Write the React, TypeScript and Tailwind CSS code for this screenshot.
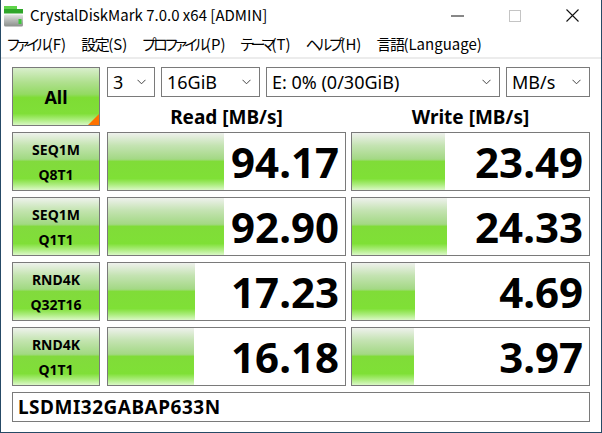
import React from 'react';

// Sizes are measured from a 125% DPI Windows 10 window
const uiFont = "font-['Noto_Sans_CJK_JP','Noto_Sans',sans-serif] [font-feature-settings:'palt']";
const numFont = "font-['Noto_Sans','Liberation_Sans',sans-serif]";

const meterGradient =
  'bg-[linear-gradient(to_bottom,#eef1ec_0%,#c4e3b2_22%,#a3d884_46%,#80dc38_50%,#7fe036_80%,#a9ec79_90%,#daf8c6_100%)]';
const buttonGradient =
  'bg-[linear-gradient(to_bottom,#eef2ec_0%,#c3e4af_22%,#a1d982_46%,#82da3d_50%,#80df38_80%,#aaec7b_90%,#dcf8c8_100%)]';
const allGradient =
  'bg-[linear-gradient(to_bottom,#d9efcc_0%,#b0e08f_25%,#93da62_46%,#7edc34_52%,#80df38_80%,#a8ec78_90%,#d8f7c3_100%)]';

type Row = {
  top: string;
  bottom: string;
  read: string;
  write: string;
  readBar: number;  // px inside the cell
  writeBar: number;
};

const rows: Row[] = [
  { top: 'SEQ1M', bottom: 'Q8T1', read: '94.17', write: '23.49', readBar: 116, writeBar: 93 },
  { top: 'SEQ1M', bottom: 'Q1T1', read: '92.90', write: '24.33', readBar: 116, writeBar: 95 },
  { top: 'RND4K', bottom: 'Q32T16', read: '17.23', write: '4.69', readBar: 87, writeBar: 63 },
  { top: 'RND4K', bottom: 'Q1T1', read: '16.18', write: '3.97', readBar: 86, writeBar: 62 },
];

// Yu Gothic UI kana are much narrower than Noto's, so squeeze them a little
const Kana = ({ children, tight }: { children: React.ReactNode; tight?: boolean }) => (
  <span className={tight ? 'tracking-[-3.6px]' : 'tracking-[-2.8px]'}>{children}</span>
);
const Kanji = ({ children }: { children: React.ReactNode }) => (
  <span className="tracking-[-1.5px]">{children}</span>
);

const AppIcon = () => (
  <svg width="20" height="21" viewBox="0 0 20 21" className="shrink-0">
    <defs>
      <linearGradient id="diskBody" x1="0" y1="0" x2="0" y2="1">
        <stop offset="0%" stopColor="#e4e6e4" />
        <stop offset="45%" stopColor="#b9bcb9" />
        <stop offset="100%" stopColor="#8b8f8b" />
      </linearGradient>
    </defs>
    <rect x="0" y="0" width="13" height="3.5" fill="#5fd44a" />
    <rect x="0" y="3" width="19" height="4.5" fill="#2fa62a" />
    <rect x="0" y="8.5" width="19" height="12" rx="1.5" fill="url(#diskBody)" />
    <rect x="14.5" y="13" width="3" height="5" fill="#3cc93a" />
  </svg>
);

const Chevron = () => (
  <svg width="9" height="6" viewBox="0 0 9 6" className="shrink-0">
    <polyline points="0.5,0.8 4.5,4.8 8.5,0.8" fill="none" stroke="#444" strokeWidth="1" />
  </svg>
);

const Select = ({ value, width }: { value: string; width: string }) => (
  <div
    className={`${width} h-[30px] flex items-center justify-between border border-[#7a7a7a] bg-white pl-[5px] pr-[8px] ${numFont} text-[18px] leading-none text-black`}
  >
    <span>{value}</span>
    <Chevron />
  </div>
);

const Cell = ({ value, bar }: { value: string; bar: number }) => (
  <div className="relative w-[239px] h-[59px] border border-[#7a7a7a] bg-white flex items-center justify-end pr-[6px]">
    <div className={`absolute left-0 top-0 bottom-0 ${meterGradient}`} style={{ width: bar }} />
    <span className={`relative ${numFont} font-bold text-[42px] leading-none text-black`}>{value}</span>
  </div>
);

export default function App() {
  return (
    <div className="w-[602px] h-[433px] bg-white border-x border-b border-[#264a66] flex flex-col overflow-hidden">
      {/* title bar */}
      <div className={`h-[31px] flex items-center ${uiFont} text-[15px] text-black`}>
        <div className="pl-[3px] pr-[6px] pt-[1px]">
          <AppIcon />
        </div>
        <span className="pb-[1px]">CrystalDiskMark 7.0.0 x64 [ADMIN]</span>
        <div className="flex-1" />
        <div className="w-[58px] h-full flex items-center justify-center">
          <svg width="13" height="2" viewBox="0 0 13 2">
            <line x1="0" y1="1" x2="13" y2="1" stroke="#111" strokeWidth="1" />
          </svg>
        </div>
        <div className="w-[58px] h-full flex items-center justify-center">
          <svg width="12" height="12" viewBox="0 0 12 12">
            <rect x="0.5" y="0.5" width="11" height="11" fill="none" stroke="#c4c4c4" strokeWidth="1" />
          </svg>
        </div>
        <div className="w-[57px] h-full flex items-center justify-center">
          <svg width="13" height="13" viewBox="0 0 13 13">
            <path d="M0.5 0.5 L12.5 12.5 M12.5 0.5 L0.5 12.5" stroke="#111" strokeWidth="1.1" />
          </svg>
        </div>
      </div>

      {/* menu bar */}
      <div className={`h-[26px] flex items-center gap-[15px] pl-[6px] ${uiFont} text-[15px] text-black`}>
        <span><Kana>ファイル</Kana>(F)</span>
        <span><Kanji>設定</Kanji>(S)</span>
        <span><Kana>プロファイル</Kana>(P)</span>
        <span><Kana tight>テーマ</Kana>(T)</span>
        <span><Kana>ヘルプ</Kana>(H)</span>
        <span><Kanji>言語</Kanji>(Language)</span>
      </div>
      <div className="h-[2px] bg-[#ececec]" />

      {/* main panel */}
      <div className="flex flex-col pl-[11px] pt-[8px]">
        <div className="flex">
          <div
            className={`relative w-[88px] h-[59px] border border-[#7a7a7a] ${allGradient} flex items-center justify-center overflow-hidden`}
          >
            <span className={`${numFont} font-bold text-[18px] leading-none text-black`}>All</span>
            <div className="absolute right-0 bottom-0 w-0 h-0 border-l-[11px] border-l-transparent border-b-[11px] border-b-[#ff7200]" />
          </div>
          <div className="ml-[7px] flex flex-col">
            <div className="flex gap-[6px]">
              <Select value="3" width="w-[48px]" />
              <Select value="16GiB" width="w-[99px]" />
              <Select value="E: 0% (0/30GiB)" width="w-[234px]" />
              <Select value="MB/s" width="w-[84px]" />
            </div>
            <div className={`flex h-[35px] pt-[6px] ${numFont} font-bold text-[19px] leading-[29px] text-black`}>
              <div className="w-[239px] text-center">Read [MB/s]</div>
              <div className="w-[239px] ml-[5px] text-center">Write [MB/s]</div>
            </div>
          </div>
        </div>

        <div className="flex flex-col gap-[6px]">
          {rows.map((r, i) => (
            <div key={i} className="flex">
              <div
                className={`w-[88px] h-[59px] border border-[#7a7a7a] ${buttonGradient} flex flex-col items-center justify-center ${numFont} font-bold text-[14px] leading-[25px] text-black`}
              >
                <span>{r.top}</span>
                <span>{r.bottom}</span>
              </div>
              <div className="ml-[7px]">
                <Cell value={r.read} bar={r.readBar} />
              </div>
              <div className="ml-[5px]">
                <Cell value={r.write} bar={r.writeBar} />
              </div>
            </div>
          ))}

          <div
            className={`w-[578px] h-[30px] border border-[#7a7a7a] bg-white flex items-center pl-[5px] ${numFont} font-bold text-[19px] tracking-[0.5px] leading-none text-black`}
          >
            LSDMI32GABAP633N
          </div>
        </div>
      </div>
    </div>
  );
}
